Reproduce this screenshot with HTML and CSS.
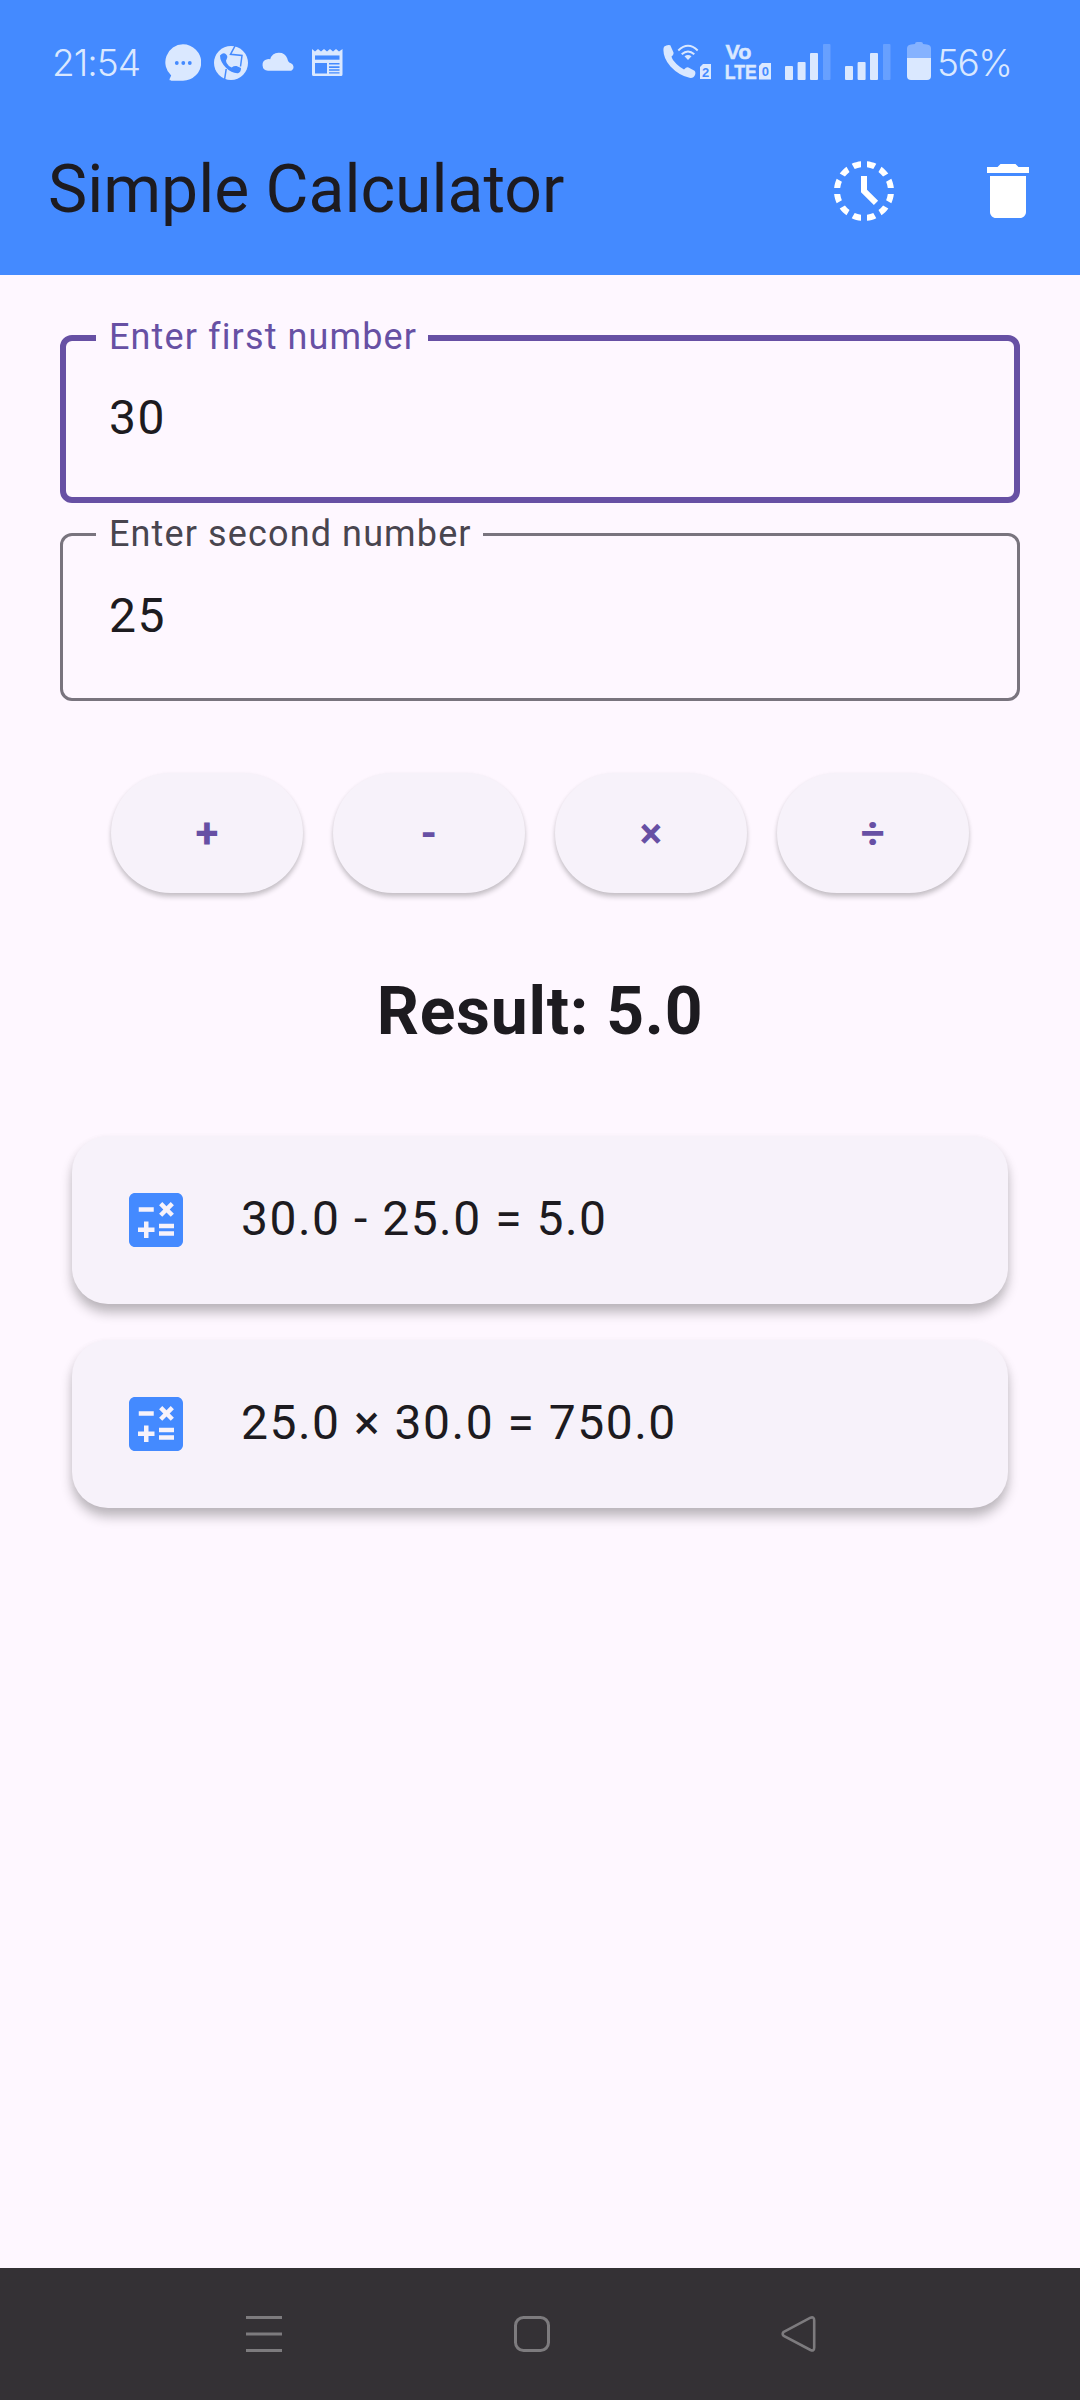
FILE: index.html
```html
<!DOCTYPE html>
<html lang="en">
<head>
<meta charset="utf-8">
<title>Simple Calculator</title>
<link rel="stylesheet" href="styles.css">
</head>
<body>
<div class="screen">
  <header class="header">
    <div class="status">
      <span class="clock">21:54</span>
      <svg class="chat" width="36" height="38" viewBox="0 0 36 38"><path fill="#dae8ff" d="M18 0.300a18 18 0 0 1 0 36.400H6.500C4.500 36.700 4.200 35.800 4.800 34.400L6.200 31.600A18 18 0 0 1 18 .3z"/><g fill="#448aff"><circle cx="11.800" cy="19" r="1.900"/><circle cx="18.300" cy="19" r="1.900"/><circle cx="24.800" cy="19" r="1.900"/></g></svg>
      <svg class="caller" width="34" height="34" viewBox="0 0 34 34"><circle cx="17" cy="17" r="17" fill="#dae8ff"/><g fill="none" stroke="#448aff" stroke-width="1.500"><path d="M21.500-1 16.500 8.300 28 9.500 26.500 20.500"/><path d="M10.500 34 12.200 23"/></g><path fill="#448aff" d="M6 9.500Q9 6.300 11 7.500Q14.500 10 12.800 12.700Q11.300 14.500 12.600 17Q14.500 20.500 17.600 21.400Q20 19.700 22.500 20L27 22Q27 26.500 24 27.200Q17.500 27.500 12 21.800Q6 15.500 6 9.500z"/></svg>
      <svg class="cloud" width="34" height="20" viewBox="0 0 34 20"><path fill="#dae8ff" d="M6 18.800A5.800 5.800 0 0 1 5.300 7.300 Q6.800 6.800 8.200 7.300A9 9 0 0 1 25.300 6.500Q26 10.700 29 11.200A4.200 4.200 0 0 1 29.300 18.800z"/></svg>
      <svg class="news" width="31" height="28" viewBox="0 0 31 28"><path fill="#dae8ff" d="M0 0 3 2.600 6 0 9 2.600 12 0 15 2.600 18 0 21 2.600 24 0 27 2.600 30.500 0V25.500Q30.500 27 29 27H1.500Q0 27 0 25.500z"/><g fill="#448aff"><path d="M3 7h24.500v5H3z" transform="translate(0 .5) scale(1 .85)"/><path d="M3 14h12v10.500H3zM17 14h10.500v1.600H17zM17 17.300h10.500v1.600H17zM17 20.300h10.500v1.500H17zM17 23.200h10.500v1.400H17z"/></g></svg>

      <svg class="calling" width="50" height="36" viewBox="0 0 50 36"><path fill="#dae8ff" d="M1 2.800Q4 .5 7.300 1.300L10.500 8.500Q11 10.500 8.500 12.500Q9 15.500 13.500 20Q17.500 23.800 21 25.500Q23.500 22.800 25.500 23.500L31.500 26.800Q33 28 32 31Q30.500 34.500 26.500 33.800Q16 31.500 7.500 22.500Q-.3 13.500.5 4.500z"/><g fill="none" stroke="#dae8ff" stroke-width="1.900"><path d="M15.300 6.500Q25-2.800 34.700 6.500"/><path d="M18.700 10.300Q25 4.500 31.300 10.300"/></g><path fill="#dae8ff" d="M21.500 12.300Q25 9.500 28.500 12.300L25 16z"/><path fill="#dae8ff" d="M40 20h8v15H37V23z"/><text class="sim" x="39" y="32.800">2</text></svg>
      <svg class="volte" width="47" height="42" viewBox="0 -4 47 42"><text class="vo" x=".5" y="14.500" textLength="26" lengthAdjust="spacingAndGlyphs">Vo</text><text class="vo" x="-.3" y="35" textLength="32" lengthAdjust="spacingAndGlyphs">LTE</text><path fill="#dae8ff" d="M37 19h9v16.500H34V22z"/><text class="sim" x="36.800" y="32">0</text></svg>
      <svg class="bars" width="46" height="36" viewBox="0 0 46 36"><g fill="#dae8ff"><rect y="22" width="8" height="14" rx="1"/><rect x="12.600" y="18" width="8" height="18" rx="1"/><rect x="25" y="9" width="8" height="27" rx="1"/><rect x="38" width="7.500" height="36" rx="1" opacity=".24"/></g></svg>
      <svg class="bars second" width="46" height="36" viewBox="0 0 46 36"><g fill="#dae8ff"><rect y="22" width="8" height="14" rx="1"/><rect x="12.600" y="18" width="8" height="18" rx="1"/><rect x="25" y="9" width="8" height="27" rx="1"/><rect x="38" width="7.500" height="36" rx="1" opacity=".24"/></g></svg>
      <svg class="battery" width="24" height="38" viewBox="0 0 24 38"><path fill="#85b2ff" d="M8 2Q8 0 10 0H14Q16 0 16 2L20 2.500Q24 3 24 6.500V17H0V6.500Q0 3 4 2.500z"/><path fill="#dae8ff" d="M0 16h24v18q0 4-4 4H4q-4 0-4-4z"/></svg>
      <span class="percent">56%</span>
    </div>
    <div class="appbar">
      <h1 class="title">Simple Calculator</h1>
      <svg class="icon" viewBox="0 0 24 24" fill="#fff"><path d="M15.100 19.370l1 1.740c-.96.44-2.010.73-3.100.84v-2.020c.74-.09 1.440-.28 2.100-.56zM4.070 13H2.050c.11 1.100.4 2.140.84 3.100l1.740-1c-.28-.66-.47-1.360-.56-2.100zM15.100 4.630l1-1.740c-.96-.44-2-.73-3.100-.84v2.020c.74.09 1.440.28 2.100.56zM19.930 11h2.020c-.11-1.100-.4-2.140-.84-3.100l-1.740 1c.28.66.47 1.360.56 2.100zM8.900 19.370l-1 1.740c.96.44 2.010.73 3.100.84v-2.020c-.74-.09-1.440-.28-2.100-.56zM11 4.070V2.050c-1.100.11-2.140.4-3.100.84l1 1.740c.66-.28 1.360-.47 2.100-.56zM18.360 7.170l1.740-1.010c-.63-.87-1.400-1.640-2.270-2.270l-1.010 1.740c.59.45 1.100.96 1.540 1.540zM4.630 8.900l-1.740-1c-.44.96-.73 2-.84 3.100h2.020c.09-.74.28-1.440.56-2.100zM19.930 13c-.09.74-.28 1.440-.56 2.100l1.740 1c.44-.96.73-2.010.84-3.100h-2.020zM16.830 18.360l1.010 1.740c.87-.63 1.640-1.400 2.270-2.270l-1.740-1.010c-.45.59-.96 1.100-1.540 1.540zM7.170 5.640L6.170 3.890c-.87.63-1.640 1.400-2.270 2.270l1.740 1.010c.44-.58.95-1.090 1.530-1.530zM5.640 16.830l-1.740 1c.63.87 1.400 1.640 2.270 2.270l1.010-1.740c-.59-.44-1.100-.95-1.540-1.530zM13 7h-2v5.410l4.290 4.290 1.410-1.410-3.700-3.700V7z"/></svg>
      <svg class="icon" viewBox="0 0 24 24" fill="#fff"><path d="M6 19c0 1.100.9 2 2 2h8c1.100 0 2-.9 2-2V7H6v12zM19 4h-3.500l-1-1h-5l-1 1H5v2h14V4z"/></svg>
    </div>
  </header>
  <main class="content">
    <div class="field focused"><span class="label">Enter first number</span><span class="value">30</span></div>
    <div class="field"><span class="label">Enter second number</span><span class="value">25</span></div>
    <div class="operators">
      <button class="op">+</button>
      <button class="op">-</button>
      <button class="op">×</button>
      <button class="op">÷</button>
    </div>
    <p class="result">Result: 5.0</p>
    <div class="history">
      <div class="card"><svg class="icon" viewBox="0 0 24 24" fill="#448aff"><path d="M19 3H5c-1.100 0-2 .9-2 2v14c0 1.100.9 2 2 2h14c1.100 0 2-.9 2-2V5c0-1.100-.9-2-2-2zm-5.970 4.060L14.090 6l1.410 1.410L16.910 6l1.060 1.060-1.410 1.410 1.410 1.410-1.060 1.060-1.410-1.400-1.410 1.410-1.060-1.060 1.410-1.410-1.410-1.420zm-6.780.66h5v1.500h-5v-1.500zM11.500 16h-2v2H8v-2H6v-1.500h2v-2h1.500v2h2V16zm6.500 1.250h-5v-1.500h5v1.500zm0-2.500h-5v-1.500h5v1.500z"/></svg><span class="entry">30.0 - 25.0 = 5.0</span></div>
      <div class="card"><svg class="icon" viewBox="0 0 24 24" fill="#448aff"><path d="M19 3H5c-1.100 0-2 .9-2 2v14c0 1.100.9 2 2 2h14c1.100 0 2-.9 2-2V5c0-1.100-.9-2-2-2zm-5.970 4.060L14.090 6l1.410 1.410L16.910 6l1.060 1.060-1.410 1.410 1.410 1.410-1.060 1.060-1.410-1.400-1.410 1.410-1.060-1.060 1.410-1.410-1.410-1.420zm-6.780.66h5v1.500h-5v-1.500zM11.500 16h-2v2H8v-2H6v-1.500h2v-2h1.500v2h2V16zm6.500 1.250h-5v-1.500h5v1.500zm0-2.500h-5v-1.500h5v1.500z"/></svg><span class="entry">25.0 × 30.0 = 750.0</span></div>
    </div>
  </main>
  <nav class="navbar">
    <svg width="36" height="38" viewBox="0 0 36 38"><path d="M0 2.500h36M0 19h36M0 35.500h36"/></svg>
    <svg width="36" height="38" viewBox="0 0 36 38"><rect x="1.500" y="2.500" width="33" height="33" rx="8"/></svg>
    <svg width="36" height="38" viewBox="0 0 36 38"><path d="M2.800 16.800 29.500 2.700Q33.200 1.500 33.200 5.500V32.500Q33.200 36.500 29.500 35L2.800 21Q.5 19 2.800 16.800z" stroke-width="2.600"/></svg>
  </nav>
</div>
</body>
</html>
```
FILE: styles.css
```css
* { box-sizing: border-box; }

body {
  margin: 0;
  font-family: Roboto, "Liberation Sans", sans-serif;
  color: #1d1b20;
}

svg { display: block; flex: none; }

.screen {
  display: flex;
  flex-direction: column;
  width: 1080px;
  height: 2400px;
  background: #fef7ff;
}

.header { height: 275px; background: #448aff; }

.status {
  display: flex;
  align-items: flex-start;
  height: 107px;
  padding: 42px 0 0 52px;
}

.clock, .percent {
  font-family: Inter, Roboto, sans-serif;
  font-weight: 300;
  font-size: 37px;
  line-height: 42px;
  color: #dae8ff;
  white-space: nowrap;
}

.clock { width: 113px; letter-spacing: -1px; }
.percent { margin-left: 6px; letter-spacing: -1.5px; }
.chat { margin-top: 2px; }
.caller { margin: 4px 0 0 13px; }
.cloud { margin: 10px 0 0 14px; }
.news { margin: 7px 0 0 16px; }
.calling { margin: 2px 0 0 320px; }
.volte { margin: -2px 0 0 12px; }
.bars { margin: 2px 0 0 13px; }
.bars.second { margin-left: 14px; }
.battery { margin-left: 16px; }

.vo { font: bold 21px "Liberation Sans", sans-serif; fill: #dae8ff; stroke: #dae8ff; stroke-width: 0.5px; }
.sim { font: bold 13px "Liberation Sans", sans-serif; fill: #448aff; }

.appbar {
  display: flex;
  align-items: center;
  height: 168px;
  padding: 0 36px 0 48px;
  gap: 72px;
}

.title { flex: 1; margin: 0; padding-bottom: 2px; font-size: 66px; line-height: 84px; font-weight: 400; }
.icon { width: 72px; height: 72px; }

.content {
  display: flex;
  flex: 1;
  flex-direction: column;
  padding: 60px 60px 0;
}

.field {
  position: relative;
  height: 168px;
  margin-bottom: 30px;
  padding: 50px 46px 0;
  border: 3px solid #79747e;
  border-radius: 12px;
}

.field.focused { padding: 47px 43px 0; border: 6px solid #6750a4; }

.label {
  position: absolute;
  top: -20px;
  left: 33px;
  padding: 0 11px 0 13px;
  font-size: 36px;
  line-height: 36px;
  letter-spacing: 1.125px;
  color: #49454f;
  background: #fef7ff;
}

.focused .label { top: -22px; left: 30px; color: #6750a4; }

.value { display: block; font-size: 48px; line-height: 60px; letter-spacing: 1.5px; }

.operators {
  display: flex;
  justify-content: center;
  gap: 30px;
  margin-top: 42px;
}

.op {
  width: 192px;
  height: 120px;
  padding: 2px 0 0;
  border: 0;
  border-radius: 60px;
  background: #f7f2fa;
  box-shadow: 0 4px 5px rgba(0, 0, 0, 0.2), 0 1px 4px rgba(0, 0, 0, 0.05);
  color: #6750a4;
  font: 700 42px/60px Roboto, sans-serif;
  letter-spacing: 0.3px;
}

.result {
  margin: 72px 0 0;
  font-size: 66px;
  line-height: 94px;
  font-weight: 700;
  letter-spacing: 0.75px;
  text-align: center;
}

.history { display: flex; flex-direction: column; gap: 36px; padding: 77px 12px 0; }

.card {
  display: flex;
  align-items: center;
  gap: 48px;
  height: 168px;
  padding: 0 48px;
  border-radius: 36px;
  background: #f7f2fa;
  box-shadow: 0 9px 12px rgba(0, 0, 0, 0.24), 0 3px 9px rgba(0, 0, 0, 0.05);
  font-size: 48px;
  line-height: 72px;
  letter-spacing: 1.5px;
}

.entry { padding: 0 0 2px 1px; }

.navbar {
  display: flex;
  justify-content: space-between;
  height: 132px;
  padding: 47px 263px 0 246px;
  background: #343135;
}

.navbar svg { fill: none; stroke: #7d7b7e; stroke-width: 3px; }
```
